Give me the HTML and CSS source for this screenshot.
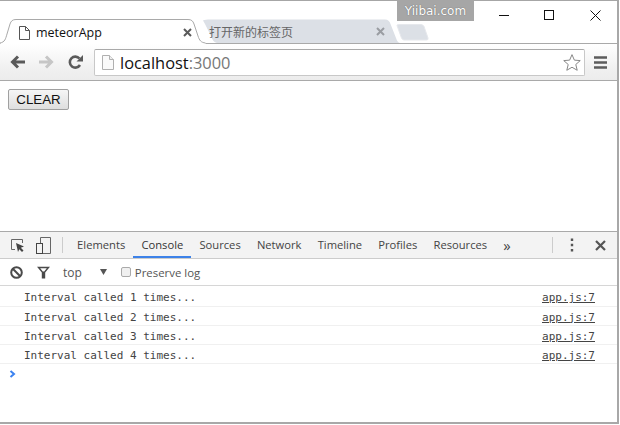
FILE: index.html
```html
<!DOCTYPE html>
<html lang="en">
<head>
<meta charset="utf-8">
<title>meteorApp</title>
<link rel="stylesheet" href="styles.css">
</head>
<body>
<div class="window">
  <header class="tabstrip">
    <div class="tab tab-active">
      <svg class="tab-shape" width="206" height="25" viewBox="0 0 206 25"><path d="M0.5 24 C5 23 5.5 20 7 15 L10 5 C11 2 12.5 0.5 16 0.5 L188 0.5 C191.500 0.500 193 2 194 5 L198 17 C199.500 21.500 201 23.500 205.500 24 L205.500 25 L0.500 25 Z" fill="#fff"/><path d="M0 24 C5 23 5.500 20 7 15 L10 5 C11 2 12.500 0.500 16 0.500 L188 0.500 C191.500 0.500 193 2 194 5 L198 17 C199.500 21.500 201 23.500 205.500 24" fill="none" stroke="#a9a9a9"/></svg>
      <svg class="doc-icon" width="11" height="14" viewBox="0 0 11 14"><path d="M0.500 0.500 H6.500 L10.500 4.500 V13.500 H0.500 Z M6.500 0.500 V4.500 H10.500" fill="#fff" stroke="#555"/></svg>
      <span class="tab-title">meteorApp</span>
      <svg class="tab-close" width="9" height="9" viewBox="0 0 9 9"><path d="M1 1 L8 8 M8 1 L1 8" stroke="#5a5a5a" stroke-width="2"/></svg>
    </div>
    <div class="tab tab-other">
      <svg class="tab-shape" width="197" height="25" viewBox="0 0 197 25"><path d="M0 1.500 C0 1.500 2 0.500 5 0.500 L182 0.500 C185 0.500 186.500 2 187.500 5 L193 19 C194 22 195 23.500 197 24 L14 24 C11 23.500 9.500 21 8.500 18 L2 5 Z" fill="#dce0e6"/></svg>
      <span class="tab-title-cjk">打开新的标签页</span>
      <svg class="tab-close" width="9" height="9" viewBox="0 0 9 9"><path d="M1 1 L8 8 M8 1 L1 8" stroke="#9a9da2" stroke-width="2"/></svg>
    </div>
    <svg class="new-tab" width="33" height="17" viewBox="0 0 33 17"><path d="M1 1.500 Q1 0.500 2.500 0.500 L25 0.500 Q27 0.500 28 2.500 L32 14 Q32.500 16 30.500 16 L8 16 Q6.500 16 5.500 14 Z" fill="#dce0e6" stroke="#e6e8ec"/></svg>
    <div class="watermark">Yiibai.com</div>
    <div class="win-controls">
      <svg width="10" height="11" viewBox="0 0 10 11"><path d="M0 5.500 H10" stroke="#111"/></svg>
      <svg width="11" height="11" viewBox="0 0 11 11"><rect x="0.500" y="0.500" width="9" height="9" fill="none" stroke="#111"/></svg>
      <svg width="11" height="11" viewBox="0 0 11 11"><path d="M0.500 0.500 L10.500 10.500 M10.500 0.500 L0.500 10.500" stroke="#111"/></svg>
    </div>
  </header>

  <nav class="toolbar">
    <svg class="nav-icon" width="16" height="14" viewBox="0 0 16 14"><path d="M15 7 H3 M8 1.500 L2.500 7 L8 12.500" fill="none" stroke="#5a5a5a" stroke-width="3"/></svg>
    <svg class="nav-icon" width="16" height="14" viewBox="0 0 16 14"><path d="M1 7 H13 M8 1.500 L13.500 7 L8 12.500" fill="none" stroke="#c6c6c6" stroke-width="3"/></svg>
    <svg class="nav-reload" width="15" height="15" viewBox="0 0 15 15"><path d="M12 10 A5.500 5.500 0 1 1 11.500 3.500" fill="none" stroke="#5a5a5a" stroke-width="2.600"/><path d="M8.500 6.500 H15 V0 Z" fill="#5a5a5a"/></svg>
    <div class="omnibox">
      <svg class="omni-doc" width="12" height="15" viewBox="0 0 12 15"><path d="M0.500 0.500 H7.500 L11.500 4.500 V14.500 H0.500 Z" fill="#fafafa" stroke="#b0b0b0"/><path d="M7.500 0.500 V4.500 H11.500" fill="#eee" stroke="#b0b0b0"/></svg>
      <span class="url">localhost<span class="url-port">:3000</span></span>
      <svg class="star" width="18" height="19" viewBox="0 0 19 19"><path d="M9.500 1.200 L12 7 L18.200 7.500 L13.500 11.600 L15 17.700 L9.500 14.500 L4 17.700 L5.500 11.600 L0.800 7.500 L7 7 Z" fill="#fff" stroke="#808080"/></svg>
    </div>
    <svg class="menu" width="13" height="13" viewBox="0 0 13 13"><path d="M0 1.500 H13 M0 6.500 H13 M0 11.500 H13" stroke="#5c5c5c" stroke-width="2.600"/></svg>
  </nav>

  <main class="page">
    <button class="clear" type="button">CLEAR</button>
  </main>

  <section class="devtools">
    <div class="dt-tabs">
      <svg class="dt-icon inspect" width="15" height="14" viewBox="0 0 15 14"><path d="M5 11.500 H1.500 V1.500 H12.500 V5" fill="none" stroke="#666"/><path d="M6 5 L14 8.500 L10.800 9.800 L13.500 12.500 L12 14 L9.300 11.300 L8 14 Z" fill="#444"/></svg>
      <svg class="dt-icon device" width="15" height="17" viewBox="0 0 15 17"><path d="M4.500 6 V0.500 H14.500 V16.500 H7" fill="none" stroke="#666"/><rect x="0.500" y="6.500" width="6" height="10" fill="none" stroke="#444"/></svg>
      <span class="dt-sep"></span>
      <span class="dt-tab">Elements</span>
      <span class="dt-tab dt-tab-on">Console</span>
      <span class="dt-tab">Sources</span>
      <span class="dt-tab">Network</span>
      <span class="dt-tab">Timeline</span>
      <span class="dt-tab">Profiles</span>
      <span class="dt-tab">Resources</span>
      <span class="dt-more">»</span>
      <span class="dt-sep dt-sep-right"></span>
      <svg class="dots" width="4" height="14" viewBox="0 0 4 14"><path d="M2 0.500 V3 M2 5.800 V8.300 M2 11 V13.500" stroke="#555" stroke-width="2.400"/></svg>
      <svg class="dt-close" width="11" height="11" viewBox="0 0 11 11"><path d="M1 1 L10 10 M10 1 L1 10" stroke="#555" stroke-width="2.200"/></svg>
    </div>
    <div class="dt-filter">
      <svg width="13" height="13" viewBox="0 0 13 13"><circle cx="6.500" cy="6.500" r="5.300" fill="none" stroke="#4a4a4a" stroke-width="2"/><path d="M2.800 2.800 L10.200 10.200" stroke="#4a4a4a" stroke-width="2"/></svg>
      <svg class="funnel" width="13" height="13" viewBox="0 0 13 13"><path d="M0 0.800 H13 L8.200 6.500 V12.500 H4.800 V6.500 Z M3.200 2.200 L5.800 5.400 H7.200 L9.800 2.200 Z" fill="#4a4a4a" fill-rule="evenodd"/></svg>
      <span class="ctx">top</span>
      <svg class="ctx-arrow" width="7" height="6" viewBox="0 0 7 6"><path d="M0 0 H7 L3.500 6 Z" fill="#555"/></svg>
      <span class="check"></span>
      <span class="preserve">Preserve log</span>
    </div>
    <div class="log">
      <div class="row row-first"><span>Interval called 1 times...</span><a class="src">app.js:7</a></div>
      <div class="row"><span>Interval called 2 times...</span><a class="src">app.js:7</a></div>
      <div class="row"><span>Interval called 3 times...</span><a class="src">app.js:7</a></div>
      <div class="row"><span>Interval called 4 times...</span><a class="src">app.js:7</a></div>
      <div class="prompt"><svg width="7" height="8" viewBox="0 0 7 8"><path d="M1.500 1 L5 4 L1.500 7" fill="none" stroke="#3b82f0" stroke-width="2"/></svg></div>
    </div>
  </section>
</div>
</body>
</html>
```

FILE: styles.css
```css
* { box-sizing: border-box; }
html, body { margin: 0; padding: 0; background: #fff; }
body { width: 620px; height: 425px; overflow: hidden; }

.window {
  width: 619px;
  height: 424px;
  display: flex;
  flex-direction: column;
  border-top: 1px solid #a6a6a6;
  border-right: 2px solid #a8a8a8;
  border-bottom: 2px solid #a8a8a8;
  background: #fff;
}

.tabstrip {
  height: 43px;
  flex: none;
  display: flex;
  align-items: flex-end;
  position: relative;
  background: #fff;
  border-bottom: 1px solid #a9a9a9;
}
.tab { position: relative; display: flex; align-items: center; height: 25px; flex: none; top: 1px; }
.tab-shape { position: absolute; left: 0; top: 0; }
.tab-active { width: 203px; z-index: 2; padding-top: 2px; }
.tab-other { width: 193px; top: 0; height: 24px; }
.doc-icon, .tab-title, .tab-close, .tab-title-cjk { position: relative; }
.doc-icon { margin-left: 19px; }
.tab-title {
  margin-left: 6px;
  font: 12.5px "Open Sans", sans-serif;
  color: #111;
  width: 147px;
}
.tab-title-cjk {
  margin-left: 6px;
  font: 12px "Noto Sans CJK SC", sans-serif;
  color: #666;
  width: 167px;
  white-space: nowrap;
}
.new-tab { flex: none; margin: 0 0 2px 0; }

.watermark {
  position: absolute;
  left: 397px;
  top: 0;
  width: 77px;
  height: 20px;
  background: #a6a6a6;
  color: #fff;
  font: 12px/20px "DejaVu Sans", sans-serif;
  text-align: center;
  text-shadow: 0 0 1px #555;
}
.win-controls {
  position: absolute;
  left: 499px;
  top: 9px;
  display: flex;
  gap: 35px;
}

.toolbar {
  height: 37px;
  flex: none;
  display: flex;
  align-items: center;
  padding-left: 10px;
  background: linear-gradient(#fff, #f0f0f0 70%, #ececec);
  border-bottom: 1px solid #a9a9a9;
}
.nav-icon { flex: none; margin-right: 12px; }
.nav-reload { flex: none; margin: 0 11px 0 2px; }
.omnibox {
  width: 491px;
  height: 27px;
  flex: none;
  display: flex;
  align-items: center;
  background: #fff;
  border: 1px solid #c8c8c8;
  border-top-color: #a9a9a9;
  border-radius: 2px;
  padding-left: 7px;
}
.url { margin-left: 6px; font: 16.4px "Open Sans", sans-serif; color: #111; flex: 1; }
.url-port { color: #777; }
.star { margin-right: 3px; }
.menu { margin-left: 9px; flex: none; }

.page { flex: 1; padding: 8px; }
.clear {
  display: block;
  width: 61px;
  height: 21px;
  padding: 0;
  font: 13.333px "Liberation Sans", sans-serif;
  color: #111;
  background: linear-gradient(#f6f6f6, #dedede);
  border: 1px solid #a0a0a0;
  border-radius: 2px;
}

.devtools { height: 191px; flex: none; border-top: 1px solid #a9a9a9; display: flex; flex-direction: column; }
.dt-tabs {
  height: 27px;
  flex: none;
  display: flex;
  align-items: center;
  background: #f3f3f3;
  border-bottom: 1px solid #ccc;
  font: 11.2px "Open Sans", sans-serif;
  color: #444;
  padding: 0 11px 0 10px;
}
.dt-icon { flex: none; }
.device { margin-left: 11px; }
.dt-sep { width: 1px; height: 16px; background: #ccc; margin-left: 11px; margin-right: 6px; flex: none; }
.dt-tab { padding: 0 8.1px; height: 26px; line-height: 26px; white-space: nowrap; }
.dt-tab-on { color: #333; border-bottom: 2px solid #3d82e8; }
.dt-more { margin-left: 8px; font-size: 15px; line-height: 20px; }
.dt-sep-right { margin-left: auto; margin-right: 0; }
.dots { margin-left: 17px; flex: none; }
.dt-close { margin-left: 21px; flex: none; }

.dt-filter {
  height: 27px;
  flex: none;
  display: flex;
  align-items: center;
  padding-left: 10px;
  background: #fff;
  border-bottom: 1px solid #d6d6d6;
  font: 12px "Open Sans", sans-serif;
  color: #555;
}
.funnel { margin-left: 14px; }
.ctx { margin-left: 13px; }
.ctx-arrow { margin-left: 18px; }
.check {
  width: 10px;
  height: 10px;
  margin-left: 14px;
  border: 1px solid #aaa;
  border-radius: 2px;
  background: #f0f0f0;
}
.preserve { margin-left: 4px; font-size: 11.4px; }

.log { flex: 1; font: 11px "DejaVu Sans Mono", monospace; color: #444; }
.row {
  height: 19px;
  display: flex;
  justify-content: space-between;
  align-items: center;
  padding: 2px 22px 0 24px;
  border-bottom: 1px solid #f0f0f0;
}
.row-first { height: 21px; padding-top: 3px; }
.src { text-decoration: underline; color: #444; }
.prompt { padding: 6px 0 0 9px; line-height: 8px; }
.prompt svg { display: block; }
```
